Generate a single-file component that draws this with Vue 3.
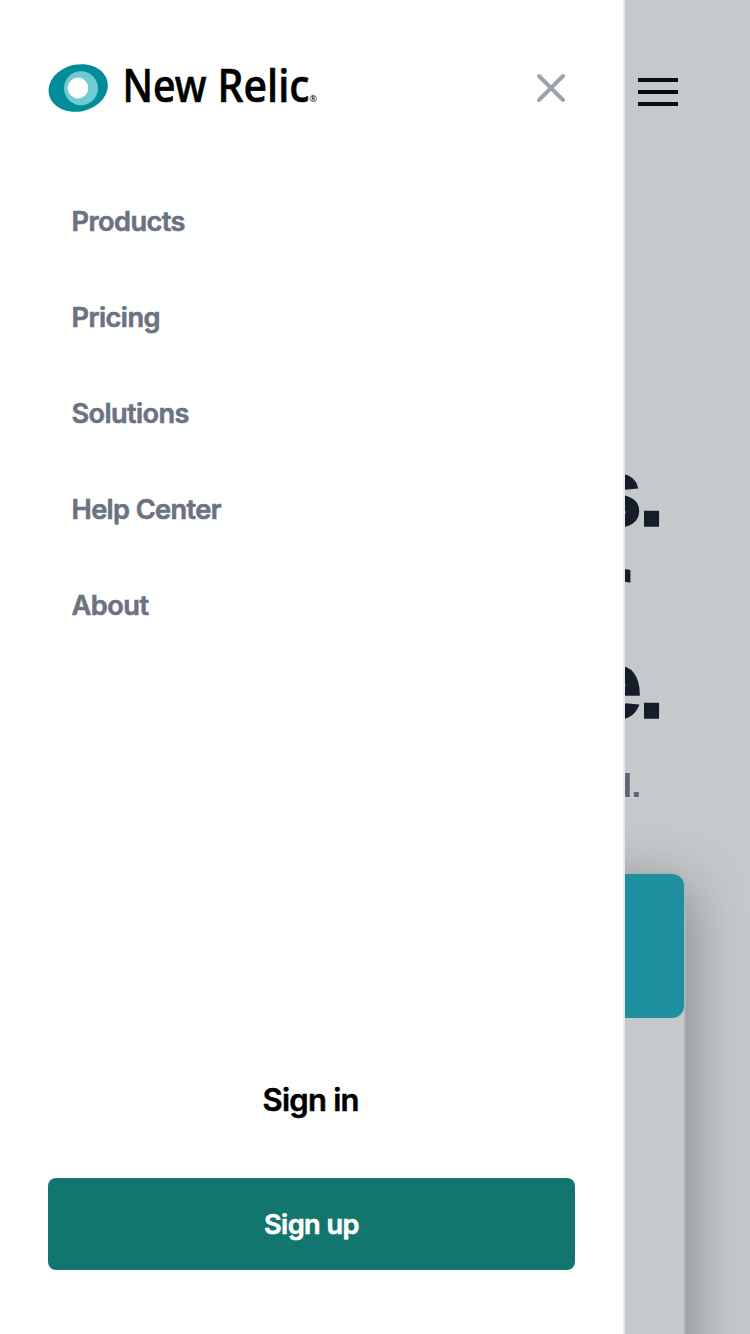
<script setup>
const links = [
  { label: 'Products', width: 114 },
  { label: 'Pricing', width: 89 },
  { label: 'Solutions', width: 118 },
  { label: 'Help Center', width: 150 },
  { label: 'About', width: 77.5 },
]
</script>

<template>
  <div class="screen">
    <main class="page">
      <header class="topbar">
        <button class="burger" aria-label="Open menu"><i></i><i></i><i></i></button>
      </header>
      <h1 class="headline">
        <span class="line">s.</span>
        <span class="line second">r</span>
        <span class="line">e.</span>
      </h1>
      <p class="sub">d.</p>
      <section class="card"><div class="card-head"></div></section>
    </main>

    <aside class="drawer">
      <div class="brand-row">
        <svg class="logo" width="272" height="50" viewBox="0 0 272 50" aria-label="New Relic">
          <ellipse cx="30.2" cy="24" rx="30" ry="23.5" transform="rotate(-13 30.2 24)" fill="#008c99" />
          <circle cx="33" cy="24.3" r="17" fill="#70ccd3" />
          <circle cx="30" cy="24" r="10.4" fill="#fff" />
          <text class="wordmark" x="74.5" y="38.3" textLength="84" lengthAdjust="spacingAndGlyphs">New</text>
          <text class="wordmark" x="169.5" y="38.3" textLength="92" lengthAdjust="spacingAndGlyphs">Relic</text>
          <text class="registered" x="261.5" y="38">®</text>
        </svg>
        <button class="close" aria-label="Close menu">
          <svg width="30" height="30" viewBox="0 0 30 30"><path d="M3 3L27 27M27 3L3 27" /></svg>
        </button>
      </div>
      <nav class="menu">
        <a v-for="link in links" :key="link.label">
          <svg width="170" height="40"><text x="-.5" y="30" :textLength="link.width" lengthAdjust="spacing">{{ link.label }}</text></svg>
        </a>
      </nav>
      <div class="actions">
        <a class="signin"><svg width="98" height="44"><text x="-.5" y="31" textLength="97" lengthAdjust="spacing">Sign in</text></svg></a>
        <a class="signup"><svg width="96" height="40"><text x="0" y="30" textLength="95.5" lengthAdjust="spacing">Sign up</text></svg></a>
      </div>
    </aside>
  </div>
</template>

<style>
body { margin: 0; background: #c5c9cc; }
</style>

<style scoped>
.screen {
  position: relative;
  width: 750px;
  height: 1334px;
  overflow: hidden;
  background: #c5c9cc;
  font-family: Inter, "Liberation Sans", sans-serif;
}
svg { display: block; overflow: visible; }
button { border: 0; padding: 0; background: none; }
.page { display: flex; flex-direction: column; height: 1334px; }
.topbar { height: 445px; flex: none; display: flex; justify-content: flex-end; align-items: flex-start; padding: 78px 72px 0 0; box-sizing: border-box; }
.burger { display: flex; flex-direction: column; gap: 8px; width: 40px; }
.burger i { height: 4px; background: #080b10; }
.headline {
  margin: 0;
  padding-right: 89px;
  font: 700 96px/96px "Liberation Sans", sans-serif;
  letter-spacing: -4px;
  color: #151d2a;
  text-align: right;
  -webkit-text-stroke: 1.5px #151d2a;
}
.line { display: block; }
.second { padding-right: 34px; }
.sub { flex: none; margin: 33px 0 0; padding-right: 109px; text-align: right; font: 700 33px/40px "Liberation Sans", sans-serif; color: #5b6270; height: 66px; }
.card {
  flex: none;
  box-sizing: border-box;
  width: 622px;
  height: 520px;
  margin-left: 64px;
  margin-top: 40px;
  border: 2px solid #afb2b9;
  border-radius: 14px;
  background: #c5c9cc;
  box-shadow: 0 16px 60px rgba(0, 0, 0, .38);
}
.card-head { height: 144px; border-radius: 12px; background: #1e8f9f; }
.drawer {
  position: absolute;
  inset: 0 auto 0 0;
  box-sizing: border-box;
  width: 625px;
  display: flex;
  flex-direction: column;
  padding: 64px 48px;
  background: #fff;
  border-right: 2px solid #e5e7e8;
}
.brand-row { display: flex; justify-content: space-between; align-items: flex-start; height: 109px; }
.wordmark { font: 500 46px "Noto Sans", sans-serif; fill: #000; stroke: #000; stroke-width: .7; }
.registered { font: 9px "Noto Sans", sans-serif; fill: #000; }
.close { margin: 9px 9px 0 0; }
.close path { stroke: #9ca3af; stroke-width: 4; stroke-linecap: round; }
.menu { display: flex; flex-direction: column; padding-left: 24px; }
.menu a { height: 96px; display: flex; align-items: center; }
.menu text { font: 600 27.2px Inter, sans-serif; fill: #6b7280; stroke: #6b7280; stroke-width: .6; }
.actions { margin-top: auto; display: flex; flex-direction: column; align-items: stretch; }
.signin { display: flex; justify-content: center; padding-bottom: 54px; }
.signin text { font: 600 31px Inter, sans-serif; fill: #000; stroke: #000; stroke-width: .5; }
.signup { display: flex; justify-content: center; align-items: center; height: 92px; border-radius: 8px; background: #13766e; }
.signup text { font: 600 27.2px Inter, sans-serif; fill: #fff; stroke: #fff; stroke-width: .6; }
</style>
